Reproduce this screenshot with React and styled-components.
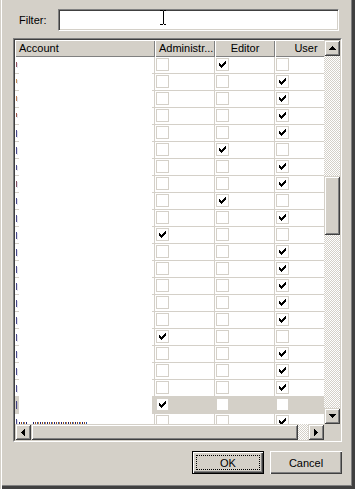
import styled, { createGlobalStyle } from "styled-components";

const FACE = "#d4d0c8";

const GlobalStyle = createGlobalStyle`
  html, body {
    margin: 0;
    padding: 0;
    background: ${FACE};
  }
  body {
    font-family: "Liberation Sans", Arial, sans-serif;
    font-size: 11px;
    color: #000;
  }
`;

// admin, editor, user + the clipped glyph remnant in the account column
const rows = [
  { a: 0, e: 1, u: 0, mark: ["#7a2a3a", 5, 5] },
  { a: 0, e: 0, u: 1, mark: ["#b8742c", 5, 4] },
  { a: 0, e: 0, u: 1, mark: ["#b0602a", 5, 5] },
  { a: 0, e: 0, u: 1, mark: ["#8a3020", 5, 4] },
  { a: 0, e: 0, u: 1, mark: ["#1e1e70", 5, 7] },
  { a: 0, e: 1, u: 0, mark: ["#1e1e70", 5, 7] },
  { a: 0, e: 0, u: 1, mark: ["#1e1e70", 6, 5] },
  { a: 0, e: 0, u: 1, mark: ["#6a2a40", 5, 6] },
  { a: 0, e: 1, u: 0, mark: ["#1e1e70", 5, 6] },
  { a: 0, e: 0, u: 1, mark: ["#1e1e70", 5, 7] },
  { a: 1, e: 0, u: 0, mark: ["#1e1e70", 5, 7] },
  { a: 0, e: 0, u: 1, mark: ["#1e1e70", 5, 7] },
  { a: 0, e: 0, u: 1, mark: ["#1e1e70", 5, 7] },
  { a: 0, e: 0, u: 1, mark: ["#1e1e70", 5, 7] },
  { a: 0, e: 0, u: 1, mark: ["#1e1e70", 5, 7] },
  { a: 0, e: 0, u: 1, mark: ["#1e1e70", 5, 7] },
  { a: 1, e: 0, u: 0, mark: ["#1e1e70", 5, 7] },
  { a: 0, e: 0, u: 1, mark: ["#1e1e70", 5, 7] },
  { a: 0, e: 0, u: 1, mark: ["#1e1e70", 5, 7] },
  { a: 0, e: 0, u: 1, mark: ["#1e1e70", 5, 7] },
  { a: 1, e: 0, u: 0, mark: ["#1e1e70", 4, 8], selected: true },
  { a: 0, e: 0, u: 1, mark: ["#1e1e70", 5, 5], last: true },
];

const Check = () => (
  <svg width="7" height="7" viewBox="0 0 7 7" shapeRendering="crispEdges">
    <path
      fill="#000"
      d="M0 2h1v3H0z M1 3h1v3H1z M2 4h1v3H2z M3 3h1v3H3z M4 2h1v3H4z M5 1h1v3H5z M6 0h1v3H6z"
    />
  </svg>
);

const Arrow = ({ dir }) => {
  const paths = {
    up: "M3 0h1v1H3z M2 1h3v1H2z M1 2h5v1H1z M0 3h7v1H0z",
    down: "M0 0h7v1H0z M1 1h5v1H1z M2 2h3v1H2z M3 3h1v1H3z",
    left: "M0 3h1v1H0z M1 2h1v3H1z M2 1h1v5H2z M3 0h1v7H3z",
    right: "M0 0h1v7H0z M1 1h1v5H1z M2 2h1v3H2z M3 3h1v1H3z",
  };
  const vertical = dir === "up" || dir === "down";
  return (
    <svg
      width={vertical ? 7 : 4}
      height={vertical ? 4 : 7}
      viewBox={vertical ? "0 0 7 4" : "0 0 4 7"}
      shapeRendering="crispEdges"
    >
      <path fill="#000" d={paths[dir]} />
    </svg>
  );
};

const IBeam = () => (
  <svg width="8" height="16" viewBox="0 0 8 16" shapeRendering="crispEdges">
    <path
      fill="#000"
      d="M1 0h3v1H1z M5 0h2v1H5z M4 1h1v13H4z M1 14h3v1H1z M5 14h2v1H5z"
    />
  </svg>
);

export default function App() {
  return (
    <>
      <GlobalStyle />
      <Dialog>
        <FilterRow>
          <Label>Filter:</Label>
          <Field>
            <TextInput type="text" defaultValue="" />
            <Cursor>
              <IBeam />
            </Cursor>
          </Field>
        </FilterRow>

        <ListBox>
          <ListInner>
            <View>
              <Header>
                <HeaderCell $w={140}>Account</HeaderCell>
                <HeaderCell $w={60}>Administr...</HeaderCell>
                <HeaderCell $w={60} $align="center">Editor</HeaderCell>
                <HeaderCell $w={62} $align="center">User</HeaderCell>
              </Header>
              {rows.map((r, i) => (
                <Row key={i} $selected={r.selected}>
                  <AccountCell>
                    <Stub>
                      <Mark $c={r.mark[0]} $t={r.mark[1]} $h={r.mark[2]} />
                    </Stub>
                    <Cover>
                      {r.last && (
                        <TextTops>
                          <Strip $w={8} />
                          <Strip $w={54} $gap={6} />
                        </TextTops>
                      )}
                    </Cover>
                  </AccountCell>
                  {[r.a, r.e, r.u].map((v, j) => (
                    <CheckCell key={j} $w={j === 2 ? 62 : 60}>
                      <Box>{v ? <Check /> : null}</Box>
                    </CheckCell>
                  ))}
                </Row>
              ))}
            </View>

            <VScroll>
              <ScrollButton>
                <Arrow dir="up" />
              </ScrollButton>
              <Track $size={120} />
              <Thumb $size={59} />
              <Track $size={173} />
              <ScrollButton>
                <Arrow dir="down" />
              </ScrollButton>
            </VScroll>

            <HScroll>
              <ScrollButton>
                <Arrow dir="left" />
              </ScrollButton>
              <Thumb $size={267} />
              <Track $size={10} />
              <ScrollButton>
                <Arrow dir="right" />
              </ScrollButton>
            </HScroll>

            <Corner />
          </ListInner>
        </ListBox>

        <ButtonRow>
          <PushButton $default>
            <Focus>OK</Focus>
          </PushButton>
          <PushButton>Cancel</PushButton>
        </ButtonRow>
      </Dialog>
    </>
  );
}

const Dialog = styled.div`
  width: 355px;
  height: 489px;
  box-sizing: border-box;
  padding: 9px 13px 0;
  display: flex;
  flex-direction: column;
  background: ${FACE};
  box-shadow: inset 1px 0 ${FACE}, inset 2px 0 #fff, inset -1px -1px #404040,
    inset -3px -3px #404040, inset -4px -4px #808080;
`;

const FilterRow = styled.div`
  display: flex;
  align-items: center;
  height: 22px;
  padding-left: 6px;
`;

const Label = styled.span`
  width: 39px;
  flex: none;
`;

const Field = styled.div`
  position: relative;
  width: 281px;
  height: 22px;
`;

const TextInput = styled.input`
  display: block;
  width: 100%;
  height: 100%;
  box-sizing: border-box;
  margin: 0;
  padding: 0 3px;
  border: 1px solid;
  border-color: #808080 #fff #fff #808080;
  box-shadow: inset 1px 1px #404040, inset -1px -1px ${FACE};
  background: #fff;
  font: inherit;
  outline: none;
`;

const Cursor = styled.div`
  position: absolute;
  left: 101px;
  top: 1px;
  line-height: 0;
  pointer-events: none;
`;

const ListBox = styled.div`
  margin-top: 7px;
  width: 329px;
  height: 404px;
  box-sizing: border-box;
  border: 1px solid;
  border-color: #808080 #fff #fff #808080;
`;

const ListInner = styled.div`
  height: 100%;
  box-sizing: border-box;
  border: 1px solid;
  border-color: #404040 ${FACE} ${FACE} #404040;
  display: grid;
  grid-template-columns: 309px 16px;
  grid-template-rows: 384px 16px;
`;

const View = styled.div`
  overflow: hidden;
  background: #fff;
`;

const Header = styled.div`
  display: flex;
  height: 17px;
`;

const HeaderCell = styled.div`
  flex: none;
  width: ${(p) => p.$w}px;
  box-sizing: border-box;
  padding: 0 4px;
  line-height: 17px;
  text-align: ${(p) => p.$align || "left"};
  white-space: nowrap;
  overflow: hidden;
  background: ${FACE};
  box-shadow: inset 1px 1px #fff, inset -1px -1px #808080;
`;

const Row = styled.div`
  display: flex;
  height: 17px;
  background: ${(p) => (p.$selected ? FACE : "#fff")};
`;

const AccountCell = styled.div`
  flex: none;
  width: 140px;
  box-sizing: border-box;
  padding-right: 3px;
  display: flex;
  box-shadow: inset -1px -1px ${FACE};
`;

const Stub = styled.div`
  flex: none;
  width: 4px;
  box-shadow: inset 0 -1px ${FACE};
`;

const Mark = styled.div`
  margin: ${(p) => p.$t}px 0 0 1px;
  width: 1px;
  height: ${(p) => p.$h}px;
  background: ${(p) => p.$c};
  opacity: 0.8;
  box-shadow: 1px 1px 0 rgba(150, 150, 190, 0.35);
`;

const Cover = styled.div`
  flex: 1;
  background: #fff;
`;

const TextTops = styled.div`
  display: flex;
  margin-top: 8px;
`;

const Strip = styled.div`
  width: ${(p) => p.$w}px;
  height: 2px;
  margin-left: ${(p) => p.$gap || 0}px;
  background: repeating-linear-gradient(
    90deg,
    #20206a 0 1px,
    transparent 1px 2px,
    #8a4a20 2px 3px,
    transparent 3px 4px,
    #3050a0 4px 5px,
    #c08040 5px 6px,
    transparent 6px 7px
  );
`;

const CheckCell = styled.div`
  flex: none;
  width: ${(p) => p.$w}px;
  box-sizing: border-box;
  padding: 1px 0 0 1px;
  box-shadow: inset -1px -1px ${FACE};
`;

const Box = styled.div`
  width: 13px;
  height: 13px;
  box-sizing: border-box;
  border: 1px solid ${FACE};
  background: #fff;
  display: grid;
  place-items: center;
  line-height: 0;
`;

const VScroll = styled.div`
  display: flex;
  flex-direction: column;
`;

const HScroll = styled.div`
  display: flex;
`;

const raised = `
  background: ${FACE};
  box-shadow: inset 1px 1px ${FACE}, inset -1px -1px #404040,
    inset 2px 2px #fff, inset -2px -2px #808080;
`;

const ScrollButton = styled.div`
  flex: none;
  width: 16px;
  height: 16px;
  display: grid;
  place-items: center;
  line-height: 0;
  ${raised}
`;

const Thumb = styled.div`
  flex: 0 0 ${(p) => p.$size}px;
  ${raised}
`;

const Track = styled.div`
  flex: 0 0 ${(p) => p.$size}px;
  background: repeating-conic-gradient(#fff 0 25%, ${FACE} 0 50%) 0 0 / 2px 2px;
`;

const Corner = styled.div`
  background: ${FACE};
`;

const ButtonRow = styled.div`
  margin-top: 9px;
  display: flex;
  justify-content: flex-end;
  gap: 6px;
`;

const PushButton = styled.button`
  width: 72px;
  height: 23px;
  box-sizing: border-box;
  margin: 0;
  padding: ${(p) => (p.$default ? "3px" : "0")};
  border: ${(p) => (p.$default ? "1px solid #000" : "none")};
  background: ${FACE};
  font: inherit;
  color: #000;
  box-shadow: inset 1px 1px #fff, inset -1px -1px #404040,
    inset -2px -2px #808080;
`;

const Focus = styled.span`
  display: flex;
  align-items: center;
  justify-content: center;
  height: 100%;
  box-sizing: border-box;
  border: 1px dotted #000;
`;
